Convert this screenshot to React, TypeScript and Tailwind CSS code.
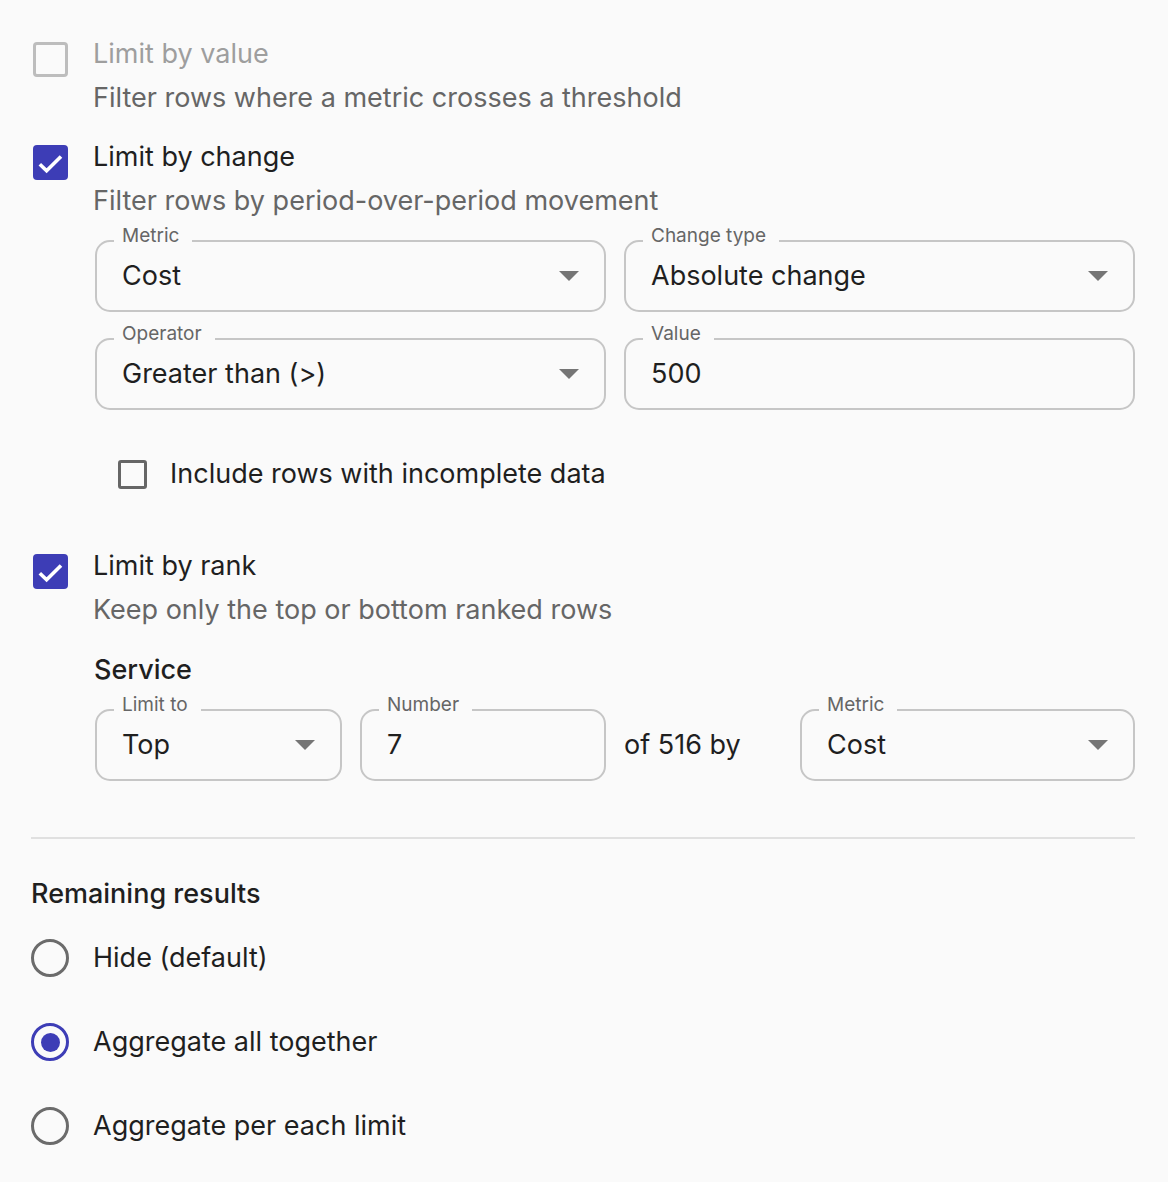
import React from 'react'

const INDIGO = 'bg-[#3d3db6]'

const ArrowDrop = () => (
  <svg width="20" height="10" viewBox="0 0 20 10" className="shrink-0">
    <polygon points="0,0 20,0 10,10" fill="#757575" />
  </svg>
)

const CheckBox = ({ checked, disabled }: { checked?: boolean; disabled?: boolean }) =>
  checked ? (
    <div className={`h-[35px] w-[35px] rounded-[4px] ${INDIGO}`}>
      <svg width="35" height="35" viewBox="0 0 35 35">
        <polyline points="6.8,19.2 13.6,25.8 28,11.4" fill="none" stroke="#fff" strokeWidth="3.6" />
      </svg>
    </div>
  ) : (
    <div
      className={`h-[35px] w-[35px] rounded-[4px] border-[3px] ${
        disabled ? 'border-[#bdbdbd]' : 'border-[#666]'
      }`}
    />
  )

const Radio = ({ checked }: { checked?: boolean }) => (
  <div
    className={`flex h-[38px] w-[38px] items-center justify-center rounded-full border-[3px] ${
      checked ? 'border-[#3d3db6]' : 'border-[#6b6b6b]'
    }`}
  >
    {checked && <div className={`h-[19px] w-[19px] rounded-full ${INDIGO}`} />}
  </div>
)

interface FieldProps {
  label: string
  value: string
  select?: boolean
  className?: string
}

const Field = ({ label, value, select, className = '' }: FieldProps) => (
  <div className={`relative h-[72px] rounded-[15px] border-2 border-[#c6c6c6] ${className}`}>
    <span className="absolute -top-[20px] left-[17px] bg-[#fafafa] pl-[8px] pr-[13px] text-[19px] leading-[28px] text-[#666]">
      {label}
    </span>
    <div className="flex h-full items-center pl-[25px] pr-[25px]">
      <span className="flex-1 text-[27px] text-[#1f1f1f]">{value}</span>
      {select && <ArrowDrop />}
    </div>
  </div>
)

interface OptionProps {
  title: string
  description: string
  checked?: boolean
  disabled?: boolean
  children?: React.ReactNode
}

const Option = ({ title, description, checked, disabled, children }: OptionProps) => (
  <div className="flex">
    <div className="w-[62px] shrink-0 pl-[2px] pt-[10px]">
      <CheckBox checked={checked} disabled={disabled} />
    </div>
    <div className="flex-1">
      <div className={`text-[27px] leading-[44px] ${disabled ? 'text-[#9e9e9e]' : 'text-[#1f1f1f]'}`}>
        {title}
      </div>
      <div className="text-[27px] leading-[44px] text-[#666]">{description}</div>
      {children}
    </div>
  </div>
)

export default function App() {
  return (
    <div
      className="min-h-screen bg-[#fafafa] pl-[31px] pr-[33px] pt-[32px]"
      style={{ fontFamily: 'Inter, "Noto Sans", sans-serif' }}
    >
      <Option title="Limit by value" description="Filter rows where a metric crosses a threshold" disabled />

      <div className="mt-[15px]">
        <Option title="Limit by change" description="Filter rows by period-over-period movement" checked>
          <div className="ml-[2px] mt-[17px] grid grid-cols-2 gap-x-[18px] gap-y-[26px]">
            <Field label="Metric" value="Cost" select />
            <Field label="Change type" value="Absolute change" select />
            <Field label="Operator" value="Greater than (>)" select />
            <Field label="Value" value="500" />
          </div>
          <div className="ml-[25px] mt-[42px] flex h-[44px] items-center gap-[23px]">
            <div className="h-[29px] w-[29px] rounded-[3px] border-[3px] border-[#666]" />
            <span className="text-[27px] text-[#1f1f1f]">Include rows with incomplete data</span>
          </div>
        </Option>
      </div>

      <div className="mt-[48px]">
        <Option title="Limit by rank" description="Keep only the top or bottom ranked rows" checked>
          <div className="ml-[1px] mt-[16px] text-[27px] font-medium leading-[44px] text-[#1f1f1f]">
            Service
          </div>
          <div className="ml-[2px] mt-[17px] flex items-center">
            <Field label="Limit to" value="Top" select className="w-[247px]" />
            <Field label="Number" value="7" className="ml-[18px] w-[246px]" />
            <span className="ml-[18px] w-[158px] text-[27px] text-[#1f1f1f]">of 516 by</span>
            <Field label="Metric" value="Cost" select className="ml-[18px] flex-1" />
          </div>
        </Option>
      </div>

      <div className="mt-[56px] h-[2px] bg-[#e0e0e0]" />

      <div className="mt-[33px] text-[27px] font-medium leading-[44px] text-[#1f1f1f]">Remaining results</div>

      <div className="flex flex-col">
        {[
          { label: 'Hide (default)', checked: false },
          { label: 'Aggregate all together', checked: true },
          { label: 'Aggregate per each limit', checked: false },
        ].map((r) => (
          <div key={r.label} className="flex h-[84px] items-center gap-[24px]">
            <Radio checked={r.checked} />
            <span className="text-[27px] text-[#1f1f1f]">{r.label}</span>
          </div>
        ))}
      </div>
    </div>
  )
}
